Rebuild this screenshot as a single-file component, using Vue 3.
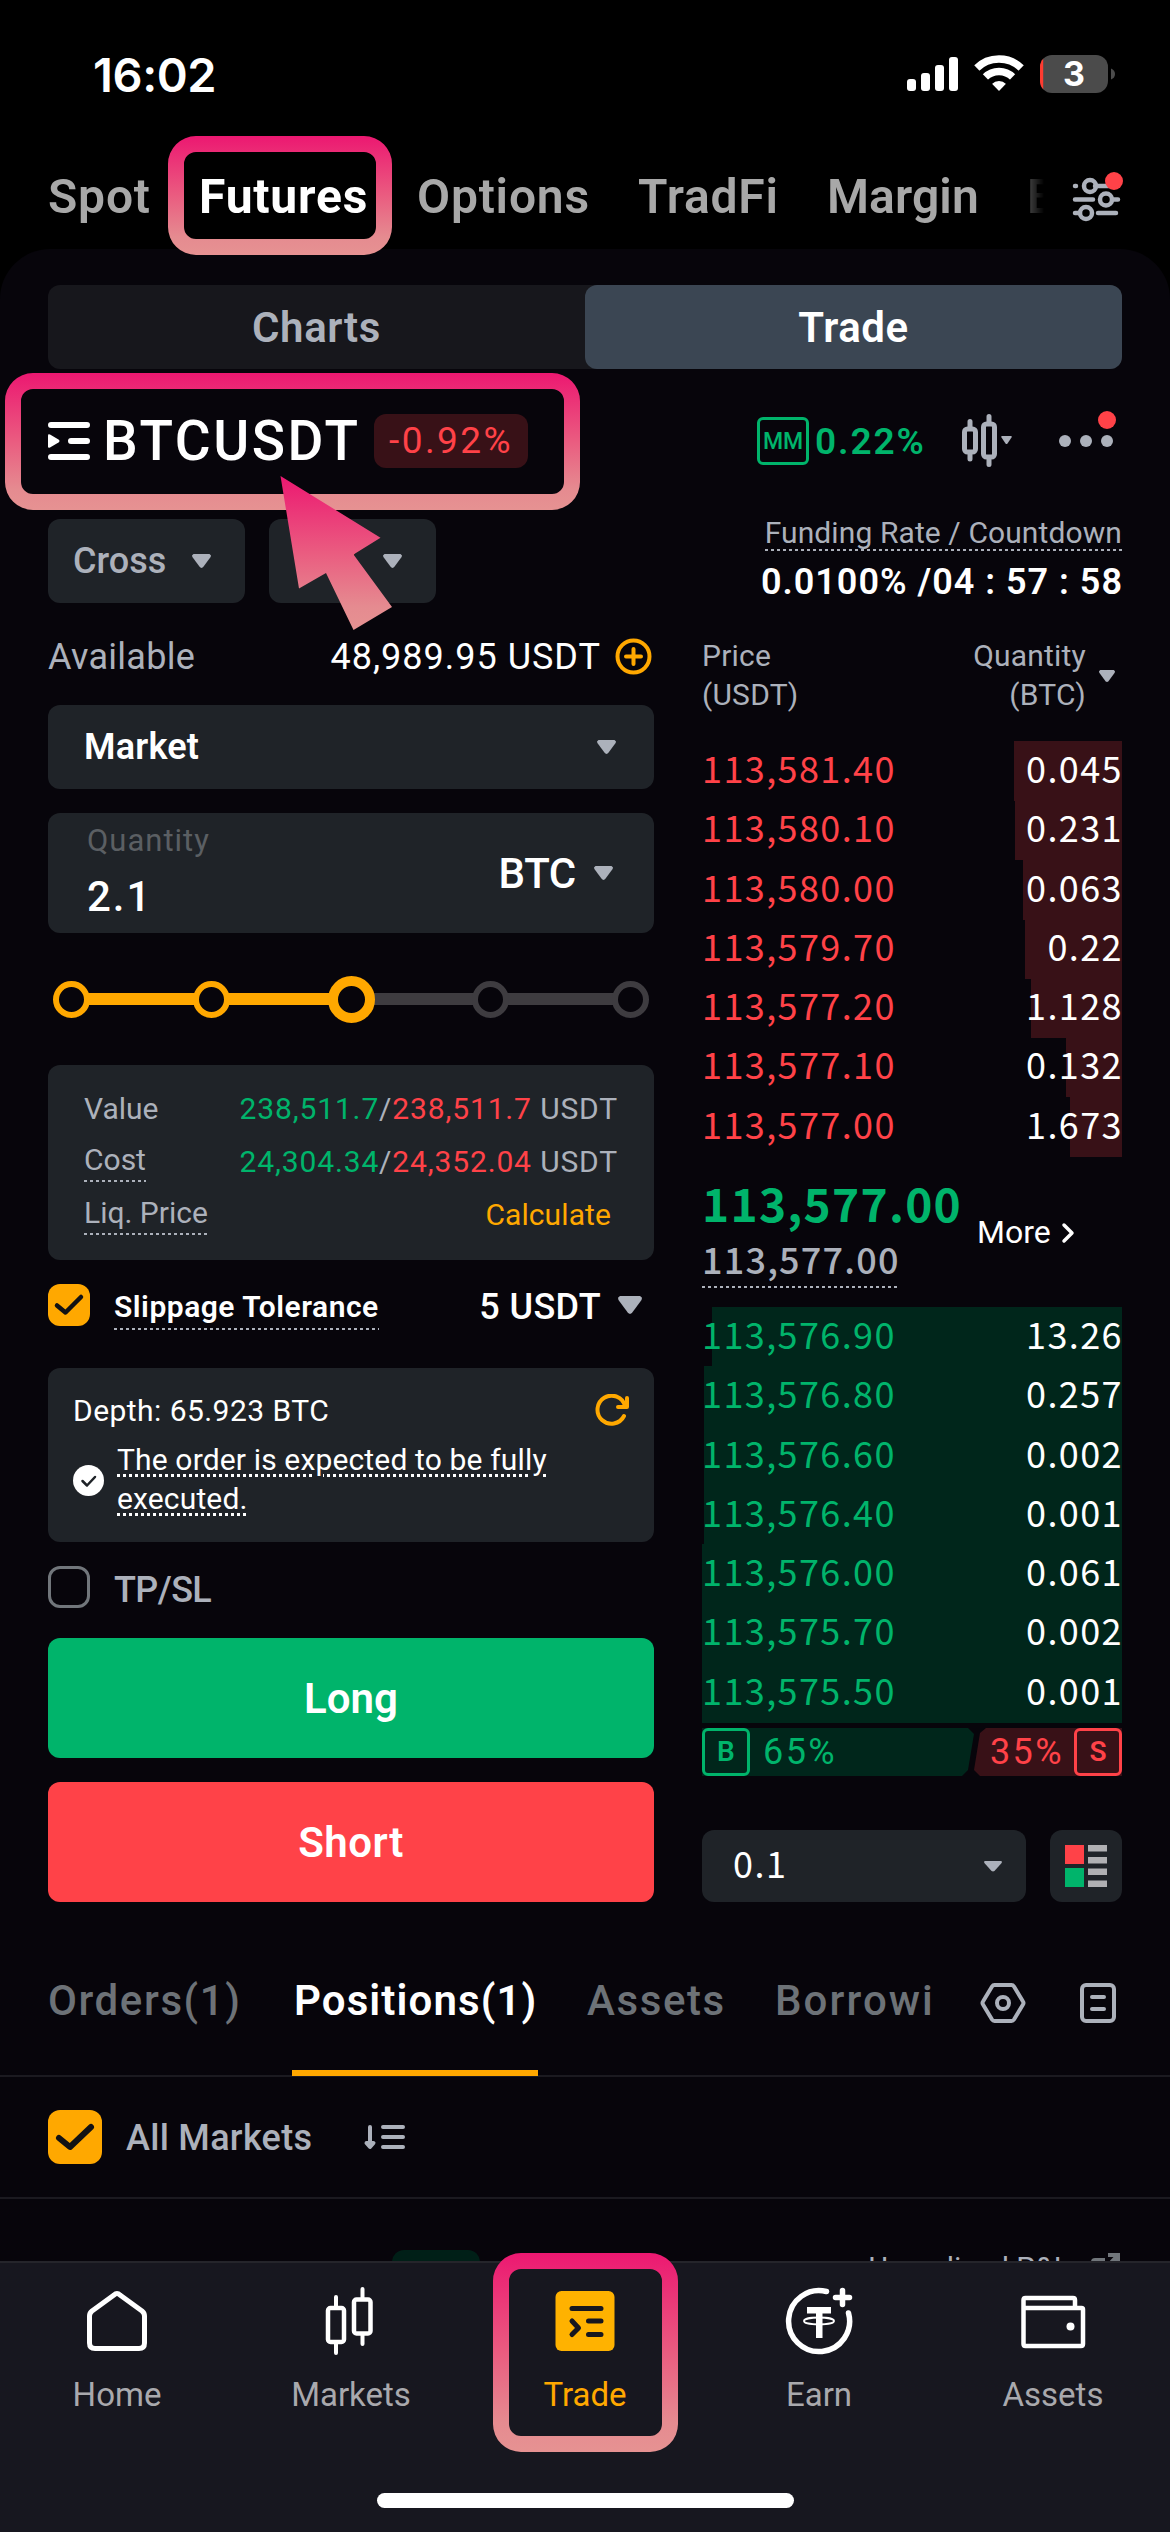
<script setup>
const markets = ['Spot', 'Futures', 'Options', 'TradFi', 'Margin', 'Byvotes']

const asks = [
  { price: '113,581.40', qty: '0.045', depth: 108 },
  { price: '113,580.10', qty: '0.231', depth: 107 },
  { price: '113,580.00', qty: '0.063', depth: 99 },
  { price: '113,579.70', qty: '0.22', depth: 97 },
  { price: '113,577.20', qty: '1.128', depth: 91 },
  { price: '113,577.10', qty: '0.132', depth: 56 },
  { price: '113,577.00', qty: '1.673', depth: 52 },
]
const bids = [
  { price: '113,576.90', qty: '13.26', depth: 410 },
  { price: '113,576.80', qty: '0.257', depth: 418 },
  { price: '113,576.60', qty: '0.002', depth: 418 },
  { price: '113,576.40', qty: '0.001', depth: 418 },
  { price: '113,576.00', qty: '0.061', depth: 420 },
  { price: '113,575.70', qty: '0.002', depth: 420 },
  { price: '113,575.50', qty: '0.001', depth: 420 },
]
const steps = [
  { on: true }, { on: true }, { current: true }, {}, {},
]
</script>

<template>
  <div class="screen">
    <header class="status">
      <span class="time">16:02</span>
      <svg class="status-icons" width="210" height="40" viewBox="0 0 210 40">
        <g fill="#fff">
          <rect x="0" y="25" width="9" height="12" rx="3" />
          <rect x="14" y="19" width="9" height="18" rx="3" />
          <rect x="28" y="11" width="9" height="26" rx="3" />
          <rect x="42" y="3" width="9" height="34" rx="3" />
        </g>
        <clipPath id="fan"><path d="M92 37L65.500 9.500V-4H118.500V9.500Z" /></clipPath>
        <g clip-path="url(#fan)" fill="none" stroke="#fff" stroke-width="7.500">
          <circle cx="92" cy="37" r="32" />
          <circle cx="92" cy="37" r="19.500" />
          <circle cx="92" cy="37" r="5" stroke-width="10" />
        </g>
        <clipPath id="cell"><rect x="133" y="1" width="68" height="38" rx="12" /></clipPath>
        <g clip-path="url(#cell)">
          <rect x="133" y="1" width="68" height="38" fill="#4b4b4b" />
          <rect x="133" y="1" width="3.200" height="38" fill="#ff3b30" />
        </g>
        <path d="M204 14.500q4 1.500 4 5.500t-4 5.500z" fill="#4b4b4b" />
        <text x="167" y="32" class="battery-level">3</text>
      </svg>
    </header>

    <nav class="markets">
      <div class="markets-scroll">
        <span v-for="(m, i) in markets" :key="m" :class="['m' + i, { active: m === 'Futures' }]">{{ m }}</span>
      </div>
      <svg class="filters" width="52" height="54" viewBox="0 0 52 54">
        <g fill="none" stroke="#acb1bb" stroke-width="4.500" stroke-linecap="round">
          <path d="M4 16h1M24 16h18M4 29.500h18M42 29.500h5M4 43h4M27 43h18" />
          <circle cx="19" cy="16" r="6" />
          <circle cx="35" cy="29.500" r="6" />
          <circle cx="15" cy="43" r="6" />
        </g>
        <circle cx="43" cy="11" r="9" fill="#ff4248" />
      </svg>
    </nav>

    <main class="panel">
      <div class="segment">
        <span>Charts</span>
        <span class="on">Trade</span>
      </div>

      <section class="symbol-row">
        <svg width="43" height="40" viewBox="0 0 43 40">
          <g stroke="#fff" stroke-width="6" stroke-linecap="round">
            <path d="M3 4h36M23 20h16M3 36h36" />
          </g>
          <path d="M0 14.500q0-2 2-1l8.500 5q2 1.500 0 3l-8.500 5q-2 1-2-1z" fill="#fff" />
        </svg>
        <h1>BTCUSDT</h1>
        <span class="change">-0.92%</span>
        <div class="tools">
          <span class="mm">MM</span>
          <span class="mm-rate">0.22%</span>
          <svg width="54" height="54" viewBox="0 0 54 54" class="candles">
            <g fill="none" stroke="#acb1bb" stroke-width="5" stroke-linecap="round">
              <rect x="4.500" y="15" width="11" height="23" rx="3" />
              <rect x="23.500" y="10" width="11" height="33" rx="3" />
              <path d="M10 7.500v5M10 41v4M29 2.500v5M29 46v4.500" />
            </g>
            <path d="M42 22h9q1.500 0 .5 1.500l-4 6q-1 1-2 0l-4-6q-1-1.500.5-1.500z" fill="#acb1bb" />
          </svg>
          <svg width="66" height="60" viewBox="0 0 66 60">
            <g fill="#acb1bb"><circle cx="9" cy="30" r="6" /><circle cx="30" cy="30" r="6" /><circle cx="51" cy="30" r="6" /></g>
            <circle cx="51" cy="9" r="9" fill="#ff4248" />
          </svg>
        </div>
      </section>

      <section class="margin-row">
        <button class="chip cross">Cross <i class="tri"></i></button>
        <button class="chip leverage"><b>10x</b> <i class="tri"></i></button>
        <div class="funding">
          <span class="dash">Funding Rate / Countdown</span>
          <strong>0.0100% /04 : 57 : 58</strong>
        </div>
      </section>

      <div class="columns">
        <section class="ticket">
          <div class="available">
            <span>Available</span>
            <b>48,989.95 USDT</b>
            <svg width="37" height="37" viewBox="0 0 37 37" fill="none" stroke="#ffa800" stroke-width="4" stroke-linecap="round">
              <circle cx="18.500" cy="18.500" r="16" />
              <path d="M18.500 11v15M11 18.500h15" />
            </svg>
          </div>

          <div class="field market"><span>Market</span><i class="tri"></i></div>

          <div class="field amount">
            <div class="amount-value"><small>Quantity</small><b>2.1</b></div>
            <span class="unit">BTC</span><i class="tri"></i>
          </div>

          <div class="slider">
            <span v-for="(s, i) in steps" :key="i" class="step" :class="s"></span>
          </div>

          <div class="summary">
            <div><span>Value</span><p><em class="up">238,511.7</em>/<em class="down">238,511.7</em> USDT</p></div>
            <div><span class="dash">Cost</span><p><em class="up">24,304.34</em>/<em class="down">24,352.04</em> USDT</p></div>
            <div><span class="dash">Liq. Price</span><p class="calc">Calculate</p></div>
          </div>

          <div class="slippage">
            <svg class="check" width="42" height="42" viewBox="0 0 42 42"><rect width="42" height="42" rx="12" fill="#ffa800" /><path d="M9 21.500l8.500 7L33 13" fill="none" stroke="#121214" stroke-width="4.500" stroke-linecap="round" stroke-linejoin="round" /></svg>
            <span class="dash">Slippage Tolerance</span>
            <b>5 USDT</b><i class="tri big"></i>
          </div>

          <div class="depth">
            <div class="depth-head">
              <span>Depth: 65.923 BTC</span>
              <svg width="36" height="34" viewBox="0 0 36 34" fill="none" stroke="#ffa800" stroke-width="4" stroke-linecap="round" stroke-linejoin="round">
                <path d="M30 22A14 14 0 1 1 31 12M33 4v9h-9" />
              </svg>
            </div>
            <div class="depth-note">
              <svg width="31" height="31" viewBox="0 0 31 31"><circle cx="15.500" cy="15.500" r="15.500" fill="#fff" /><path d="M9.500 16l4.500 4.500 8-8.500" fill="none" stroke="#1f2328" stroke-width="2.500" stroke-linecap="round" stroke-linejoin="round" /></svg>
              <p><u>The order is expected to be fully executed.</u></p>
            </div>
          </div>

          <div class="tpsl"><i class="box"></i><span>TP/SL</span></div>
          <button class="cta long">Long</button>
          <button class="cta short">Short</button>
        </section>

        <section class="book">
          <div class="book-head">
            <span>Price<br>(USDT)</span>
            <span class="right">Quantity<br>(BTC)</span>
            <i class="tri small"></i>
          </div>
          <div v-for="r in asks" :key="r.price" class="level ask">
            <i class="bar" :style="{ width: r.depth + 'px' }"></i>
            <span>{{ r.price }}</span><b>{{ r.qty }}</b>
          </div>
          <div class="last">
            <div>
              <strong>113,577.00</strong>
              <span class="dash">113,577.00</span>
            </div>
            <p>More</p>
            <svg width="16" height="22" viewBox="0 0 16 22" fill="none" stroke="#fff" stroke-width="3.500" stroke-linecap="round" stroke-linejoin="round"><path d="M4 3l8 8-8 8" /></svg>
          </div>
          <div v-for="r in bids" :key="r.price" class="level bid">
            <i class="bar" :style="{ width: r.depth + 'px' }"></i>
            <span>{{ r.price }}</span><b>{{ r.qty }}</b>
          </div>
          <div class="ratio">
            <div class="buy"><b>B</b><span>65%</span></div>
            <div class="sell"><span>35%</span><b>S</b></div>
          </div>
          <div class="book-foot">
            <div class="field tick"><span>0.1</span><i class="tri flat"></i></div>
            <div class="field layout">
              <svg width="42" height="42" viewBox="0 0 42 42">
                <path d="M0 0h19v19H0z" fill="#ff4248" /><path d="M0 23h19v19H0z" fill="#00b46b" />
                <path d="M23 0h19v6.500H23zM23 12h19v6.500H23zM23 23.500h19V30H23zM23 35.500h19V42H23z" fill="#b0b0b3" />
              </svg>
            </div>
          </div>
        </section>
      </div>

      <nav class="tabs">
        <span class="t1">Orders(1)</span>
        <span class="t2 active">Positions(1)</span>
        <span class="t3">Assets</span>
        <span class="t4">Borrowi</span>
        <svg class="hex" width="46" height="42" viewBox="0 0 46 42" fill="none" stroke="#acb1bb" stroke-width="4">
          <path d="M14.500 3h17q1.500 0 2.500 1.500l9 15q1 1.500 0 3l-9 15Q33 39 31.500 39h-17Q13 39 12 37.500l-9-15q-1-1.500 0-3l9-15Q13 3 14.500 3z" />
          <circle cx="23" cy="21" r="6" />
        </svg>
        <svg width="36" height="40" viewBox="0 0 36 40" fill="none" stroke="#acb1bb" stroke-width="4">
          <rect x="2" y="2" width="32" height="36" rx="4" /><path d="M12 14h12M12 26h12" stroke-linecap="round" />
        </svg>
      </nav>

      <div class="filter">
        <svg width="54" height="54" viewBox="0 0 54 54"><rect width="54" height="54" rx="12" fill="#ffa800" /><path d="M11 28l11 9L43 17" fill="none" stroke="#121214" stroke-width="6" stroke-linecap="round" stroke-linejoin="round" /></svg>
        <span>All Markets</span>
        <svg width="42" height="26" viewBox="0 0 42 26" fill="none" stroke="#acb1bb" stroke-width="4" stroke-linecap="round" stroke-linejoin="round">
          <path d="M19 3h20M19 13h20M19 23h20M6 3v17" /><path d="M2.500 19L6 23l3.500-4z" fill="#acb1bb" />
        </svg>
      </div>

      <div class="position">
        <i class="side"></i>
        <span>Unrealized P&amp;L</span>
        <svg width="30" height="30" viewBox="0 0 30 30" fill="none" stroke="#71767b" stroke-width="4"><path d="M14 10H4q-2 0-2 2v16h20V18M17 5h10v10M27 5L15 18" /></svg>
      </div>
    </main>

    <footer class="dock">
      <a>
        <svg width="72" height="72" viewBox="0 0 72 72" fill="none" stroke="#fff" stroke-width="5" stroke-linejoin="round"><path d="M36 8.500q1.500 0 3 1.500L61 26q2.500 2 2.500 5v27q0 5.500-5.500 5.500H14q-5.500 0-5.500-5.500V31q0-3 2.500-5l22-16q1.500-1.500 3-1.500z" /></svg>
        <span>Home</span>
      </a>
      <a>
        <svg width="72" height="72" viewBox="0 0 72 72" fill="none" stroke="#fff" stroke-width="4.500" stroke-linecap="round"><rect x="13" y="23" width="16" height="34" rx="2.500" /><rect x="39" y="14.500" width="16.500" height="34" rx="2.500" /><path d="M21 12v10M21 58v10M47.500 4v10M47.500 49v10" stroke-width="4" /></svg>
        <span>Markets</span>
      </a>
      <a class="active">
        <svg width="72" height="72" viewBox="0 0 72 72"><rect x="6.500" y="6" width="59" height="60" rx="6" fill="#ffb200" /><path d="M23 23.500h29M39.500 36h12.500M39.500 49.500h12.500M23 36l6.500 7-6.500 6.500" fill="none" stroke="#17171f" stroke-width="5" stroke-linecap="round" stroke-linejoin="round" /></svg>
        <span>Trade</span>
      </a>
      <a>
        <svg width="72" height="72" viewBox="0 0 72 72" fill="none" stroke="#fff" stroke-width="5.500" stroke-linecap="round"><path d="M43.500 6.500A30.500 30.500 0 1 0 65.500 28" /><path d="M59.500 5.500v14M52.500 12.500h14" /><path d="M24 22h24v6.500h-8.500V53h-6.500V28.500H24z" fill="#fff" stroke="none" /><ellipse cx="36" cy="36" rx="15" ry="3.500" stroke-width="1.800" /></svg>
        <span>Earn</span>
      </a>
      <a>
        <svg width="72" height="72" viewBox="0 0 72 72" fill="none" stroke="#fff" stroke-width="4.500" stroke-linejoin="round"><path d="M6.500 23h58q1.500 0 1.500 1.500V59q0 2-2 2H8.500q-2 0-2-2V15q0-2 2-2H56q2 0 2 2v8" /><circle cx="53.500" cy="41.500" r="4" fill="#fff" stroke="none" /></svg>
        <span>Assets</span>
      </a>
      <i class="home-bar"></i>
    </footer>

    <svg class="marks" width="1170" height="2532" viewBox="0 0 1170 2532">
      <defs>
        <linearGradient id="mark" x1="0" y1="0" x2="0" y2="1">
          <stop offset="0" stop-color="#ec1871" />
          <stop offset="0.500" stop-color="#ea5c80" />
          <stop offset="0.850" stop-color="#e58b90" />
          <stop offset="1" stop-color="#e69292" />
        </linearGradient>
      </defs>
      <g fill="url(#mark)" fill-rule="evenodd">
        <path d="M196 136h168a28 28 0 0 1 28 28v63a28 28 0 0 1-28 28H196a28 28 0 0 1-28-28v-63a28 28 0 0 1 28-28zM196 152a12 12 0 0 0-12 12v63a12 12 0 0 0 12 12h168a12 12 0 0 0 12-12v-63a12 12 0 0 0-12-12z" />
        <path d="M33 373h519a28 28 0 0 1 28 28v81a28 28 0 0 1-28 28H33a28 28 0 0 1-28-28v-81a28 28 0 0 1 28-28zM33 389a12 12 0 0 0-12 12v81a12 12 0 0 0 12 12h519a12 12 0 0 0 12-12v-81a12 12 0 0 0-12-12z" />
        <path d="M521 2253h129a28 28 0 0 1 28 28v143a28 28 0 0 1-28 28H521a28 28 0 0 1-28-28v-143a28 28 0 0 1 28-28zM521 2269a12 12 0 0 0-12 12v143a12 12 0 0 0 12 12h129a12 12 0 0 0 12-12v-143a12 12 0 0 0-12-12z" />
        <path d="M280.500 476L380.500 537.700 353.500 554.500 392 607 353.500 630 326 573 299 588.500z" />
      </g>
    </svg>
  </div>
</template>

<style>
html, body { margin: 0; background: #000; }
</style>

<style scoped>
.screen {
  --grey: #acb1bb; --green: #00b46b; --red: #ff4248; --amber: #ffa800; --card: #1f2328; --bg: #07050b;
  position: relative; display: flex; flex-direction: column;
  width: 1170px; height: 2532px; overflow: hidden;
  background: #000; color: #fff; font-family: Roboto, "Liberation Sans", sans-serif; font-size: 36px;
}
.screen * { box-sizing: border-box; }
b, em, i, strong, small, h1, p { margin: 0; font-style: normal; font-weight: inherit; font-size: inherit; }
button { border: 0; font: inherit; color: inherit; }
svg { flex: none; display: block; }

.status { display: flex; justify-content: space-between; height: 150px; padding: 54px 53px 0 93px; }
.time { font: 600 47px/42px Inter, sans-serif; letter-spacing: -0.4px; }
.battery-level { font: 700 34px Inter, sans-serif; fill: #fff; text-anchor: middle; }

.markets { display: flex; align-items: center; height: 99px; padding: 0 49px 6px 48px; font-size: 48px; font-weight: 600; color: #a8a8a8; }
.markets-scroll { display: flex; flex: none; width: 996px; overflow: hidden; line-height: 60px; white-space: nowrap;
  -webkit-mask: linear-gradient(90deg, #000 975px, #0006 980px, transparent 996px); mask: linear-gradient(90deg, #000 975px, #0006 980px, transparent 996px); }
.markets-scroll span { flex: none; width: 218px; letter-spacing: .8px; }
.markets-scroll .m0 { width: 151px; }
.markets-scroll .m2 { width: 221px; }
.markets-scroll .m3 { width: 189px; }
.markets-scroll .m4 { width: 200px; letter-spacing: .1px; }
.markets-scroll .active { color: #fff; font-weight: 700; }
.filters { margin-left: 27px; }

.panel { flex: 1; display: flex; flex-direction: column; min-height: 0; padding-top: 36px; background: var(--bg); border-radius: 50px 50px 0 0; overflow: hidden; }
.segment { flex: none; display: flex; height: 84px; margin: 0 48px; border-radius: 12px; background: #17171c; font-size: 42px; font-weight: 600; line-height: 86px; text-align: center; color: var(--grey); letter-spacing: .6px; }
.segment span { flex: 1; }
.segment .on { border-radius: 12px; background: #3b4653; color: #fff; }

.symbol-row { flex: none; display: flex; align-items: center; height: 144px; padding: 0 48px; }
h1 { width: 269px; margin-left: 12px; font-size: 55px; font-weight: 500; letter-spacing: 2.500px; }
.change { width: 154px; height: 54px; margin-left: 2px; border-radius: 12px; background: #381117; color: var(--red); font-size: 37px; line-height: 54px; text-align: center; letter-spacing: 2.400px; }
.tools { display: flex; align-items: center; margin-left: auto; }
.mm { width: 52px; height: 48px; border: 3px solid var(--green); border-radius: 6px; color: var(--green); font-size: 23px; font-weight: 500; line-height: 43px; text-align: center; }
.mm-rate { width: 151px; padding-left: 6px; color: var(--green); font-size: 37px; font-weight: 600; letter-spacing: 1.900px; }
.candles { margin-right: 42px; }

.margin-row { flex: none; display: flex; height: 90px; margin: 0 48px; padding-top: 6px; }
.chip { display: flex; align-items: center; height: 84px; padding: 0; border-radius: 12px; background: var(--card); color: var(--grey); font-weight: 500; }
.cross { width: 197px; padding: 0 34px 0 25px; justify-content: space-between; }
.leverage { width: 167px; margin-left: 24px; padding: 0 34px 0 27px; justify-content: space-between; }
.leverage b { color: var(--amber); }
.funding { display: flex; flex-direction: column; align-items: flex-end; justify-content: flex-end; margin-left: auto; color: var(--grey); font-size: 30px; }
.funding span { height: 42px; line-height: 37px; letter-spacing: .1px; }
.funding strong { margin: 9px -1px -1px 0; line-height: 44px; font-size: 36px; font-weight: 600; letter-spacing: 1px; color: #fff; }

.tri { flex: none; width: 19px; height: 14px; background: var(--grey); clip-path: polygon(8% 0, 92% 0, 100% 10%, 98% 22%, 58% 95%, 50% 100%, 42% 95%, 2% 22%, 0 10%); }
.tri.big { width: 24px; height: 18px; }
.tri.small { width: 16px; height: 12px; }
.tri.flat { width: 18px; height: 11px; }
.dash { background: repeating-linear-gradient(90deg, #acb1bb 0 3px, transparent 3px 6px) 0 100% / 100% 2px no-repeat; }

.columns { flex: none; display: flex; justify-content: space-between; height: 1299px; margin: 0 48px; }
.ticket { width: 606px; display: flex; flex-direction: column; }
.available { display: flex; align-items: center; height: 102px; padding: 5px 2px 0 0; color: var(--grey); letter-spacing: .3px; }
.available b { margin: 0 14px 0 auto; color: #fff; letter-spacing: 1px; }
.field { display: flex; align-items: center; background: var(--card); border-radius: 12px; }
.market { height: 84px; padding: 0 38px 0 36px; font-weight: 600; letter-spacing: .2px; justify-content: space-between; }
.amount { height: 120px; margin-top: 24px; padding: 0 41px 0 39px; }
.amount-value { display: flex; flex-direction: column; flex: 1; padding-top: 4px; }
.amount-value small { color: #5b5f63; font-size: 31px; line-height: 44px; letter-spacing: 1px; }
.amount-value b { font-size: 42px; font-weight: 500; line-height: 68px; letter-spacing: 2px; }
.unit { margin-right: 18px; font-size: 42px; font-weight: 500; letter-spacing: -.3px; }

.slider { display: flex; align-items: center; justify-content: space-between; height: 132px; padding: 0 5px;
  background: linear-gradient(90deg, var(--amber) 50%, #3e3c40 50%) center / 558px 12px no-repeat; }
.step { width: 37px; height: 37px; border: 6px solid #3e3c40; border-radius: 50%; background: var(--bg); }
.step.on { border-color: var(--amber); }
.step.current { width: 47px; height: 47px; margin: 0 -5px; border: 10px solid var(--amber); }

.summary { height: 195px; padding: 17px 36px 0 36px; border-radius: 12px; background: var(--card); color: var(--grey); font-size: 30px; }
.summary > div { display: flex; justify-content: space-between; height: 53px; line-height: 53px; }
.summary p { letter-spacing: .850px; }
.summary .dash { height: 47px; line-height: 50px; }
.up { color: var(--green); }
.down { color: var(--red); }
.summary .calc { margin-right: 7px; color: var(--amber); letter-spacing: .1px; }

.slippage { display: flex; align-items: center; height: 90px; margin-bottom: 18px; padding-right: 12px; }
.slippage .dash { height: 50px; margin: 0 auto 0 24px; font-size: 30px; font-weight: 600; line-height: 54px; letter-spacing: .5px; }
.slippage b { margin-right: 17px; padding-top: 4px; font-weight: 500; letter-spacing: .4px; }
.depth { height: 174px; padding: 22px 24px 0 25px; border-radius: 12px; background: var(--card); font-size: 30px; }
.depth-head { display: flex; align-items: center; justify-content: space-between; height: 41px; }
.depth-head span { letter-spacing: .450px; }
.depth-note { display: flex; align-items: center; gap: 13px; height: 100px; }
.depth-note svg { margin-top: -1px; }
.depth-note p { padding-bottom: 4px; line-height: 39px; letter-spacing: .150px; }
.depth-note u { text-decoration: underline dotted 3px; text-underline-offset: 4px; }
.tpsl { display: flex; align-items: center; height: 90px; margin-bottom: 6px; color: var(--grey); font-weight: 500; letter-spacing: -.6px; }
.tpsl span { padding-top: 5px; }
.box { width: 42px; height: 42px; margin-right: 24px; border: 3px solid #71767b; border-radius: 12px; }
.cta { height: 120px; border-radius: 12px; font-size: 42px; font-weight: 600; }
.long { background: var(--green); }
.short { margin-top: 24px; background: var(--red); letter-spacing: .5px; }

.book { width: 420px; display: flex; flex-direction: column; }
.book-head { display: flex; height: 138px; padding: 33px 7px 0 0; color: var(--grey); font-size: 30px; line-height: 39px; letter-spacing: .2px; }
.book-head .right { margin-left: auto; text-align: right; }
.book-head .tri { margin: 34px 0 0 13px; }
.level { position: relative; display: flex; justify-content: space-between; height: 59.300px; line-height: 52px; }
.level span, .level b { position: relative; font-family: "Noto Sans CJK SC", sans-serif; font-size: 36px; letter-spacing: 1.400px; }
.level b { margin-right: -1px; }
.bar { position: absolute; right: 0; top: 0; height: 60px; }
.ask span { color: var(--red); }
.bid span { color: var(--green); }
.ask .bar { background: #381117; }
.bid .bar { background: #00261b; }
.last { display: flex; align-items: center; height: 150.900px; }
.last div { display: flex; flex-direction: column; align-items: flex-start; padding-top: 1px; font-family: "Noto Sans CJK SC", sans-serif; }
.last strong { color: var(--green); font-size: 46px; font-weight: 700; line-height: 52px; letter-spacing: 1.300px; }
.last .dash { height: 60px; padding-top: 5px; color: var(--grey); font-size: 36px; font-weight: 500; line-height: 50px; letter-spacing: 1.200px; }
.last p { margin-left: 15px; font-size: 32px; }
.last svg { margin: 3px 0 0 9px; }
.ratio { display: flex; gap: 0; height: 48px; margin-top: 6px; line-height: 48px; }
.ratio div { display: flex; align-items: stretch; letter-spacing: 2.400px; }
.ratio b { width: 48px; border: 3px solid; border-radius: 6px; font-size: 28px; font-weight: 600; line-height: 42px; text-align: center; letter-spacing: 0; }
.buy { width: 272px; background: #00261b; color: var(--green); clip-path: polygon(0 0, 266px 0, 272px 6px, 266px 42px, 260px 100%, 0 100%); }
.buy span { margin-left: 13px; }
.sell { width: 148px; background: #381117; color: var(--red); justify-content: flex-end; clip-path: polygon(12px 0, 100% 0, 100% 100%, 6px 100%, 0 42px, 6px 5px); }
.sell span { margin-right: 10px; }
.book-foot { display: flex; justify-content: space-between; height: 72px; margin-top: 54px; }
.tick { width: 324px; padding: 0 24px 0 31px; justify-content: space-between; }
.tick span { margin-bottom: 8px; font-family: "Noto Sans CJK SC", sans-serif; letter-spacing: 1.500px; }
.layout { width: 72px; justify-content: center; }

.tabs { flex: none; display: flex; align-items: center; height: 151px; margin-top: 24px; padding: 0 54px 0 48px; border-bottom: 2px solid #1b1a20; font-size: 42px; font-weight: 500; line-height: 150px; color: #6d7277; letter-spacing: 1.600px; white-space: nowrap; }
.t1 { width: 244px; }
.t2 { width: 246px; padding-left: 2px; letter-spacing: 1.100px; }
.active.t2 { height: 150px; color: #fff; font-weight: 600; border-bottom: 6px solid var(--amber); }
.t3 { width: 188px; margin-left: 49px; }
.t4 { width: 164px; letter-spacing: 2.100px; overflow: hidden; }
.hex { margin: 4px 54px 0 auto; }
.tabs svg:last-child { margin-top: 4px; }
.filter { flex: none; display: flex; align-items: center; height: 122px; padding: 0 48px; border-bottom: 2px solid #1b1a20; color: var(--grey); font-weight: 500; letter-spacing: .3px; }
.filter span { width: 238px; margin-left: 24px; padding-top: 2px; }
.position { flex: 1; display: flex; padding: 51px 49px 0 392px; color: var(--grey); font-size: 30px; overflow: hidden; }
.side { width: 88px; height: 40px; border-radius: 12px; background: #001f17; }
.position span { margin: 0 21px 0 auto; }

.dock { position: relative; flex: none; display: flex; height: 271px; border-top: 2px solid #25252b; background: #17171f; color: #a9a9ad; font-size: 33px; }
.dock a { flex: 1; display: flex; flex-direction: column; align-items: center; padding-top: 22px; }
.dock span { margin-top: 6px; line-height: 64px; }
.dock .active { color: var(--amber); }
.home-bar { position: absolute; left: 377px; bottom: 24px; width: 417px; height: 15px; border-radius: 8px; background: #fff; }
.marks { position: absolute; left: 0; top: 0; }
</style>
